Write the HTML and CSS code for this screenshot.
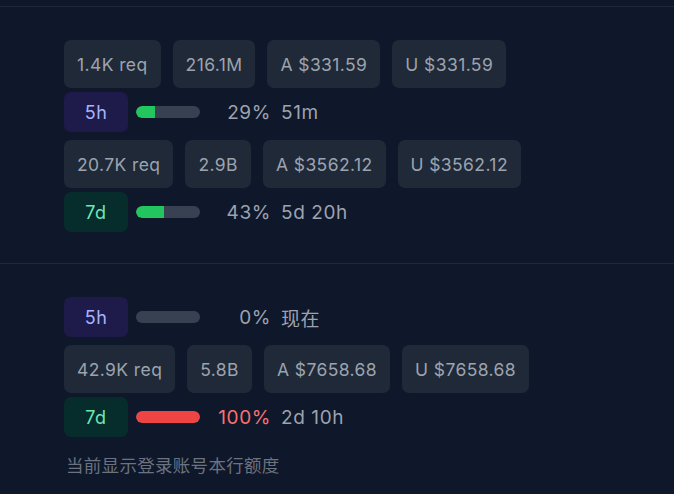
FILE: index.html
```html
<!DOCTYPE html>
<html lang="zh-CN">
<head>
<meta charset="utf-8">
<link rel="stylesheet" href="styles.css">
</head>
<body>
<div class="top-spacer"></div>
<section class="account">
  <div class="block">
    <div class="chips">
      <span class="chip">1.4K req</span>
      <span class="chip">216.1M</span>
      <span class="chip">A $331.59</span>
      <span class="chip">U $331.59</span>
    </div>
    <div class="window">
      <span class="tag tag-5h">5h</span>
      <span class="bar"><span class="fill fill-green" style="width:30%"></span></span>
      <span class="pct">29%</span>
      <span class="reset">51m</span>
    </div>
  </div>
  <div class="block">
    <div class="chips">
      <span class="chip">20.7K req</span>
      <span class="chip">2.9B</span>
      <span class="chip">A $3562.12</span>
      <span class="chip">U $3562.12</span>
    </div>
    <div class="window">
      <span class="tag tag-7d">7d</span>
      <span class="bar"><span class="fill fill-green" style="width:43%"></span></span>
      <span class="pct">43%</span>
      <span class="reset">5d 20h</span>
    </div>
  </div>
</section>
<section class="account">
  <div class="block">
    <div class="window">
      <span class="tag tag-5h">5h</span>
      <span class="bar"></span>
      <span class="pct">0%</span>
      <span class="reset">现在</span>
    </div>
  </div>
  <div class="block">
    <div class="chips">
      <span class="chip">42.9K req</span>
      <span class="chip">5.8B</span>
      <span class="chip">A $7658.68</span>
      <span class="chip">U $7658.68</span>
    </div>
    <div class="window">
      <span class="tag tag-7d">7d</span>
      <span class="bar"><span class="fill fill-red" style="width:100%"></span></span>
      <span class="pct pct-red">100%</span>
      <span class="reset">2d 10h</span>
    </div>
  </div>
  <p class="note">当前显示登录账号本行额度</p>
</section>
</body>
</html>
```
FILE: styles.css
```css
html, body {
  margin: 0;
  padding: 0;
  background: #0f172a;
  font-family: Inter, "Noto Sans CJK SC", sans-serif;
  color: #9ca3af;
  height: 100%;
  overflow: hidden;
}
.top-spacer {
  height: 6px;
}
.account {
  border-top: 1px solid #1e293b;
  padding: 33px 0 31px 64px;
  display: flex;
  flex-direction: column;
  gap: 8px;
}
.block {
  display: flex;
  flex-direction: column;
  gap: 4px;
}
.chips {
  display: flex;
  gap: 12px;
}
.chip {
  background: #1f2937;
  border-radius: 7px;
  height: 48px;
  padding: 0 13px;
  display: flex;
  align-items: center;
  font-size: 17.5px;
  letter-spacing: 0.4px;
  color: #9ca3af;
}
.window {
  display: flex;
  align-items: center;
  height: 40px;
}
.tag {
  width: 64px;
  height: 40px;
  border-radius: 7px;
  display: flex;
  align-items: center;
  justify-content: center;
  font-size: 18px;
  letter-spacing: 0.5px;
}
.tag-5h {
  background: #1e1b4b;
  color: #a5b4fc;
}
.tag-7d {
  background: #062c2c;
  color: #6ee7b7;
}
.bar {
  margin-left: 8px;
  width: 64px;
  height: 12px;
  border-radius: 6px;
  background: #374151;
  overflow: hidden;
  display: flex;
}
.fill {
  height: 100%;
  border-radius: 6px 0 0 6px;
}
.fill-green { background: #22c55e; }
.fill-red { background: #ef4444; border-radius: 6px; }
.pct {
  width: 71px;
  text-align: right;
  font-size: 19px;
  letter-spacing: 0.6px;
  color: #9ca3af;
}
.pct-red { color: #f87171; }
.reset {
  margin-left: 10px;
  font-size: 19px;
  letter-spacing: 0.6px;
  color: #9ca3af;
}
.note {
  margin: 7px 0 0 2px;
  font-size: 17.5px;
  letter-spacing: 0.3px;
  color: #6b7280;
}
```
